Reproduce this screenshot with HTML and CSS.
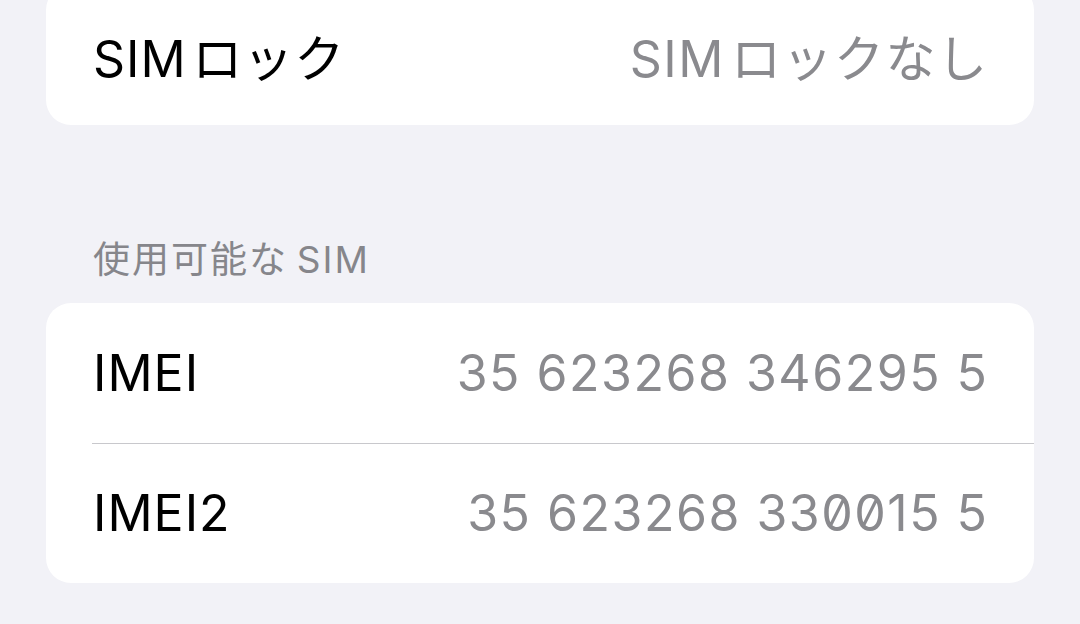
FILE: index.html
```html
<!DOCTYPE html>
<html lang="ja">
<head>
  <meta charset="utf-8">
  <title>SIM</title>
  <link rel="stylesheet" href="styles.css">
</head>
<body class="bg-grouped">
  <div id="settings">
    <div class="group">
      <div class="row">
        <span class="label">SIM&#8202;ロック</span>
        <span class="value">SIM&#8202;ロックなし</span>
      </div>
    </div>

    <div class="section-title">使用可能な&#8201;SIM</div>
    <div class="group">
      <div class="row">
        <span class="label">IMEI</span>
        <span class="value">35 623268 346295 5</span>
      </div>
      <div class="row">
        <span class="label">IMEI2</span>
        <span class="value">35 623268 330015 5</span>
      </div>
    </div>
  </div>
</body>
</html>
```

FILE: styles.css
```css
html, body {
  margin: 0;
  padding: 0;
}

.bg-grouped {
  background: #f2f2f7;
  font-family: Inter, "Noto Sans CJK JP", sans-serif;
  overflow: hidden;
}

#settings {
  padding: 0 46px;
  margin-top: -15px;
}

.group {
  background: #fff;
  border-radius: 25px;
  overflow: hidden;
}

.row {
  display: flex;
  align-items: center;
  justify-content: space-between;
  height: 140px;
  padding: 0 47px;
  position: relative;
}

.row + .row::before {
  content: "";
  position: absolute;
  top: 0;
  left: 46px;
  right: 0;
  border-top: 1px solid #c8c8cc;
}

.label {
  font-size: 50px;
  letter-spacing: 1px;
  color: #000;
}

.value {
  font-size: 50px;
  letter-spacing: 1.5px;
  margin-right: -1.5px;
  color: #8a8a8e;
  font-feature-settings: "zero";
}

.section-title {
  font-size: 37px;
  line-height: 44px;
  letter-spacing: 2px;
  color: #86868b;
  padding: 113px 0 21px 47px;
}
```
